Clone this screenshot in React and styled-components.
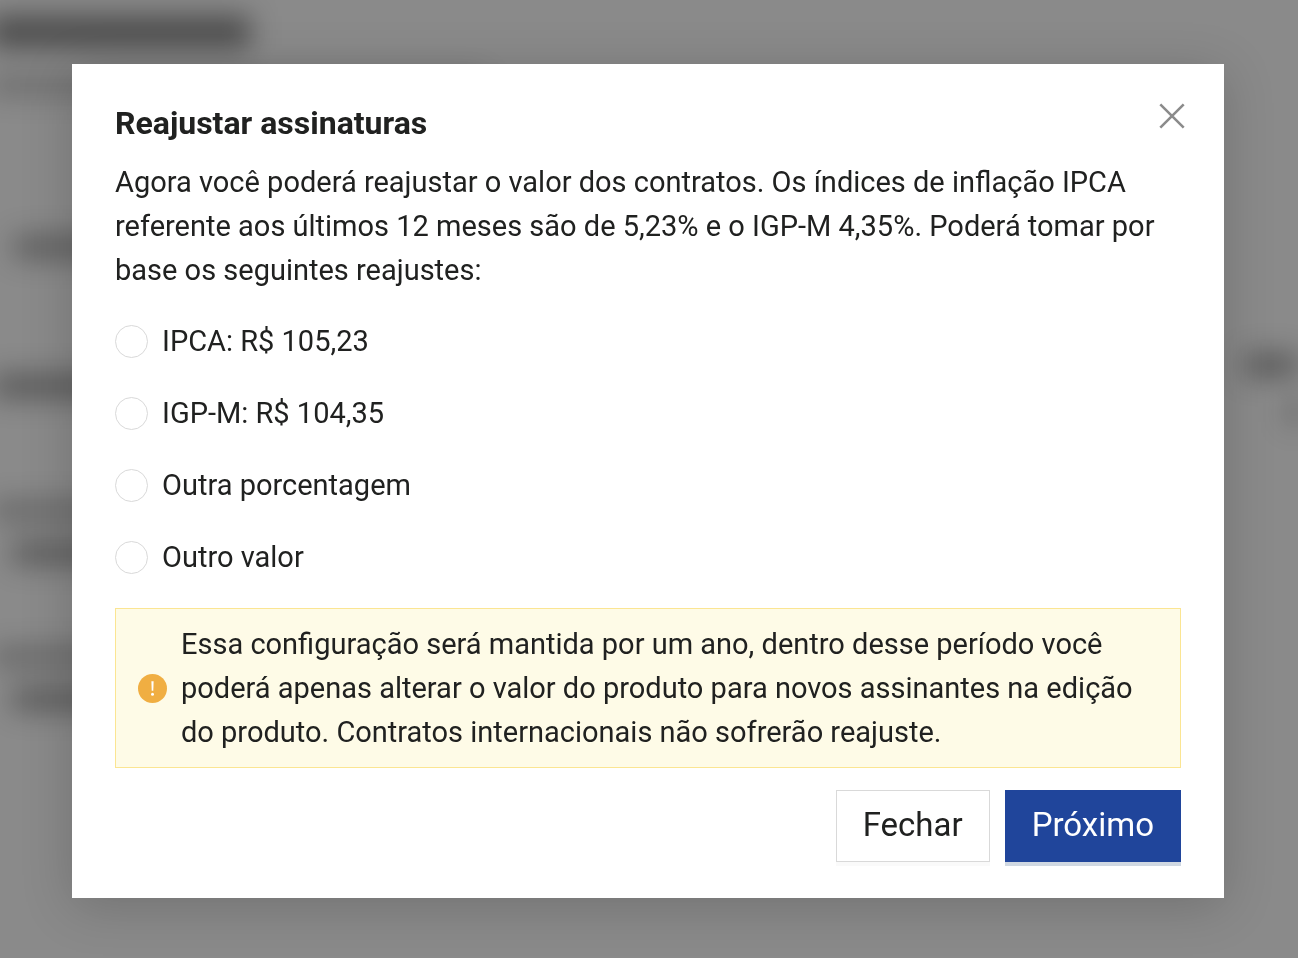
import React from "react";
import styled, { createGlobalStyle } from "styled-components";

const GlobalStyle = createGlobalStyle`
  *, *::before, *::after { box-sizing: border-box; }
  body {
    margin: 0;
    background: #8a8a8a;
    color: #202120;
    font-family: Roboto, "Liberation Sans", sans-serif;
    font-size: 29px;
    line-height: 44px;
  }
  button, input { font-family: inherit; }
`;

const Backdrop = styled.div`
  position: fixed;
  inset: 0;
  overflow: hidden;
  display: flex;
  justify-content: space-between;
`;

const PageColumn = styled.div`
  display: flex;
  flex-direction: column;
  align-items: ${(p) => (p.$end ? "flex-end" : "flex-start")};
`;

const Smudge = styled.span`
  flex: none;
  width: ${(p) => p.$width}px;
  height: ${(p) => p.$height}px;
  margin-top: ${(p) => p.$gap}px;
  margin-left: ${(p) => p.$indent || 0}px;
  background: rgba(0, 0, 0, ${(p) => p.$strength});
  filter: blur(14px);
`;

const Overlay = styled.div`
  position: relative;
  min-height: 100vh;
  padding: 64px 74px 60px 72px;
`;

const Dialog = styled.section`
  background: #fff;
  box-shadow: 0 8px 48px rgba(0, 0, 0, 0.18);
`;

const Header = styled.header`
  display: flex;
  justify-content: space-between;
  align-items: flex-start;
  padding: 36px 36px 0 43px;
`;

const Title = styled.h1`
  margin: 0;
  font-size: 32px;
  font-weight: 700;
  line-height: 46px;
`;

const CloseButton = styled.button`
  display: flex;
  width: 32px;
  height: 32px;
  padding: 0;
  border: 0;
  background: none;
  color: #8b8b8b;
  cursor: pointer;
`;

const Body = styled.form`
  padding: 14px 43px 36px;
`;

const Intro = styled.p`
  margin: 0;
`;

const Options = styled.fieldset`
  display: flex;
  flex-direction: column;
  gap: 28px;
  margin: 27px 0 29px;
  padding: 0;
  border: 0;
`;

const Option = styled.label`
  display: flex;
  align-items: center;
  gap: 14px;
  cursor: pointer;
`;

const Radio = styled.input`
  appearance: none;
  flex: none;
  width: 33px;
  height: 33px;
  margin: 0;
  border: 1px solid #d9d9d9;
  border-radius: 50%;
  background: #fff;
  &:checked { border: 9px solid #20459b; }
`;

const Notice = styled.div`
  display: flex;
  align-items: center;
  gap: 14px;
  padding: 13px 22px;
  border: 1px solid #fbe592;
  background: #fefbe7;
`;

const NoticeIcon = styled.svg`
  flex: none;
  width: 29px;
  height: 29px;
`;

const NoticeText = styled.p`
  margin: 0;
`;

const Footer = styled.footer`
  display: flex;
  justify-content: flex-end;
  gap: 15px;
  margin-top: 22px;
`;

const Button = styled.button`
  height: 72px;
  padding: 0 26px 2px;
  border: 1px solid ${(p) => (p.$primary ? "#20459b" : "#d9d9d9")};
  background: ${(p) => (p.$primary ? "#20459b" : "#fff")};
  color: ${(p) => (p.$primary ? "#fff" : "#202120")};
  box-shadow: 0 4px 0 ${(p) => (p.$primary ? "#d0d8e2" : "#fafafa")};
  font-size: 33px;
  line-height: 44px;
  cursor: pointer;
`;

const options = [
  { id: "ipca", label: "IPCA: R$ 105,23" },
  { id: "igpm", label: "IGP-M: R$ 104,35" },
  { id: "percent", label: "Outra porcentagem" },
  { id: "value", label: "Outro valor" },
];

export default function App() {
  return (
    <>
      <GlobalStyle />
      <Backdrop aria-hidden="true">
        <PageColumn>
          <Smudge $width={260} $height={32} $gap={16} $indent={-10} $strength={0.46} />
          <Smudge $width={494} $height={18} $gap={28} $indent={-10} $strength={0.24} />
          <Smudge $width={120} $height={22} $gap={142} $indent={14} $strength={0.34} />
          <Smudge $width={150} $height={24} $gap={116} $indent={-6} $strength={0.36} />
          <Smudge $width={150} $height={18} $gap={104} $indent={-6} $strength={0.3} />
          <Smudge $width={140} $height={22} $gap={22} $indent={12} $strength={0.36} />
          <Smudge $width={150} $height={18} $gap={84} $indent={-6} $strength={0.3} />
          <Smudge $width={140} $height={22} $gap={22} $indent={12} $strength={0.36} />
        </PageColumn>
        <PageColumn $end>
          <Smudge $width={54} $height={22} $gap={354} $strength={0.38} />
          <Smudge $width={8} $height={24} $gap={24} $strength={0.54} />
        </PageColumn>
      </Backdrop>
      <Overlay>
        <Dialog role="dialog" aria-modal="true" aria-labelledby="dialog-title">
          <Header>
            <Title id="dialog-title">Reajustar assinaturas</Title>
            <CloseButton type="button" aria-label="Fechar janela">
              <svg width="32" height="32" viewBox="0 0 32 32" fill="none" stroke="currentColor" strokeWidth="2.6">
                <path d="M4.3 4.3 27.7 27.7M27.7 4.3 4.3 27.7" />
              </svg>
            </CloseButton>
          </Header>
          <Body onSubmit={(e) => e.preventDefault()}>
            <Intro id="intro">
              Agora você poderá reajustar o valor dos contratos. Os índices de inflação IPCA
              referente aos últimos 12 meses são de 5,23% e o IGP-M 4,35%. Poderá tomar por
              base os seguintes reajustes:
            </Intro>
            <Options aria-labelledby="intro">
              {options.map((o) => (
                <Option key={o.id} htmlFor={o.id}>
                  <Radio type="radio" name="adjustment" id={o.id} value={o.id} />
                  {o.label}
                </Option>
              ))}
            </Options>
            <Notice role="note">
              <NoticeIcon viewBox="0 0 29 29" aria-hidden="true">
                <circle cx="14.5" cy="14.5" r="14.5" fill="#f0ae42" />
                <path d="M13.4 7.2h2.2l-.3 9.6h-1.6z" fill="#fff" />
                <circle cx="14.5" cy="20.2" r="1.5" fill="#fff" />
              </NoticeIcon>
              <NoticeText>
                Essa configuração será mantida por um ano, dentro desse período você poderá
                apenas alterar o valor do produto para novos assinantes na edição do produto.
                Contratos internacionais não sofrerão reajuste.
              </NoticeText>
            </Notice>
            <Footer>
              <Button type="button">Fechar</Button>
              <Button type="submit" $primary>Próximo</Button>
            </Footer>
          </Body>
        </Dialog>
      </Overlay>
    </>
  );
}
